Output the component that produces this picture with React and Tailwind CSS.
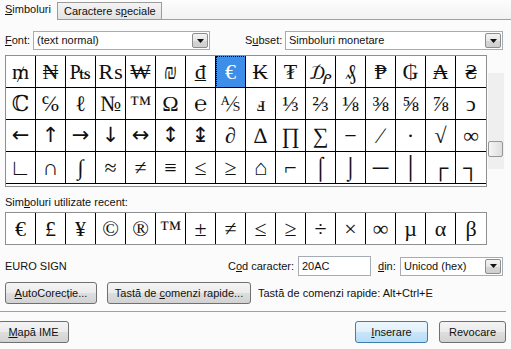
import React from "react";

const ROWS = [
  ["₥", "₦", "₧", "₨", "₩", "₪", "₫", "€", "₭", "₮", "₯", "₰", "₱", "₲", "₳", "₴"],
  ["ℂ", "℅", "ℓ", "№", "™", "Ω", "℮", "⅍", "ⅎ", "⅓", "⅔", "⅛", "⅜", "⅝", "⅞", "ↄ"],
  ["←", "↑", "→", "↓", "↔", "↕", "↨", "∂", "∆", "∏", "∑", "−", "∕", "∙", "√", "∞"],
  ["∟", "∩", "∫", "≈", "≠", "≡", "≤", "≥", "⌂", "⌐", "⌠", "⌡", "─", "│", "┌", "┐"],
];

const ARROWS = new Set(["←", "↑", "→", "↓", "↔", "↕", "↨"]);

const RECENT = ["€", "£", "¥", "©", "®", "™", "±", "≠", "≤", "≥", "÷", "×", "∞", "µ", "α", "β"];

function Arrow() {
  return (
    <svg width="7" height="4" viewBox="0 0 7 4">
      <path d="M0 0 H7 L3.5 4 Z" fill="#111" />
    </svg>
  );
}

function Combo({ width, text }) {
  return (
    <div
      className={`${width} h-[19px] border border-[#a5acb5] bg-white flex items-center pl-[3px] pr-[1px]`}
    >
      <span className="flex-1 truncate">{text}</span>
      <div className="w-[16px] h-[15px] border border-[#8d8d8d] rounded-[2px] bg-[linear-gradient(to_bottom,#f3f3f3_0%,#e6e6e6_50%,#d6d6d6_51%,#cfcfcf_100%)] flex items-center justify-center">
        <Arrow />
      </div>
    </div>
  );
}

function Button({ width, children, primary }) {
  return (
    <div
      className={`${width} h-[22px] rounded-[3px] border flex items-center justify-center ${
        primary
          ? "border-[#3c7fb1] bg-[linear-gradient(to_bottom,#edf7fd_0%,#def0fb_50%,#c9e6f9_51%,#b8dcf6_100%)]"
          : "border-[#707070] bg-[linear-gradient(to_bottom,#f4f4f4_0%,#ebebeb_50%,#dedede_51%,#d2d2d2_100%)]"
      }`}
    >
      {children}
    </div>
  );
}

export default function App() {
  return (
    <div className="w-[511px] h-[349px] overflow-hidden bg-[#fbfbfb] text-[11px] leading-[13px] text-[#111] font-['Liberation_Sans',sans-serif]">
      {/* Tabs */}
      <div className="h-[20px] flex bg-[linear-gradient(to_bottom,#fdfdfd,#f1f1f1)]">
        <div className="w-[57px] h-[20px] bg-[#fbfbfb] flex items-center pl-[5px] pb-[1px]">
          <span>
            <u>S</u>imboluri
          </span>
        </div>
        <div className="w-[105px] h-[18px] mt-[2px] border border-[#9b9b9b] bg-[linear-gradient(to_bottom,#f4f4f4,#e3e3e3)] flex items-center pl-[6px]">
          <span>
            Caractere s<u>p</u>eciale
          </span>
        </div>
        <div className="flex-1 border-b border-[#a0a0a0]" />
      </div>

      <div className="px-[5px]">
        {/* Font / Subset row */}
        <div className="mt-[11px] h-[19px] flex items-center">
          <span className="w-[28px]">
            <u>F</u>ont:
          </span>
          <Combo width="w-[177px]" text="(text normal)" />
          <span className="ml-[35px] w-[40px]">
            S<u>u</u>bset:
          </span>
          <Combo width="w-[218px]" text="Simboluri monetare" />
        </div>

        {/* Symbol grid + scrollbar */}
        <div className="mt-[5px] flex">
          <div className="w-[482px] border border-[#8e8f8f] pb-[2px] bg-white">
            {ROWS.map((row, ri) => (
              <div key={ri} className="flex">
                {row.map((ch, ci) => {
                  const sel = ri === 0 && ci === 7;
                  const arrow = ARROWS.has(ch);
                  return (
                    <div
                      key={ci}
                      className={`w-[30px] h-[32px] border-b border-black flex items-center justify-center leading-none ${
                        arrow
                          ? "font-['DejaVu_Sans',sans-serif] text-[21px]"
                          : "font-['Liberation_Serif','DejaVu_Serif',serif] text-[22px]"
                      } ${ci < 15 ? "border-r" : ""} ${
                        sel
                          ? "bg-[#3d8ee8] text-white outline-1 outline-dotted outline-black -outline-offset-1"
                          : ""
                      }`}
                    >
                      {ch}
                    </div>
                  );
                })}
              </div>
            ))}
          </div>
          <div className="ml-[1px] mt-[18px] w-[16px] h-[96px] bg-[#efefef] flex flex-col">
            <div className="h-[68px]" />
            <div className="h-[16px] w-[15px] border border-[#979797] rounded-[2px] bg-[linear-gradient(to_right,#f5f5f5,#dedede)]" />
          </div>
        </div>

        {/* Recent label */}
        <div className="mt-[9px]">
          Sim<u>b</u>oluri utilizate recent:
        </div>

        {/* Recent row */}
        <div className="mt-[3px] w-[482px] h-[33px] border border-[#8e8f8f] bg-white flex">
          {RECENT.map((ch, i) => (
            <div
              key={i}
              className={`w-[30px] h-[31px] border-black flex items-center justify-center font-['Liberation_Serif','DejaVu_Serif',serif] text-[22px] leading-none ${
                i < 15 ? "border-r" : ""
              }`}
            >
              {ch}
            </div>
          ))}
        </div>

        {/* Code row */}
        <div className="mt-[11px] h-[20px] flex items-center">
          <span className="w-[223px]">EURO SIGN</span>
          <span className="w-[70px]">
            C<u>o</u>d caracter:
          </span>
          <div className="w-[73px] h-[20px] border border-[#a5acb5] bg-white flex items-center pl-[3px]">
            20AC
          </div>
          <span className="ml-[7px] w-[22px]">
            <u>d</u>in:
          </span>
          <Combo width="w-[103px]" text="Unicod (hex)" />
        </div>

        {/* Buttons row */}
        <div className="mt-[6px] h-[22px] flex items-center">
          <Button width="w-[92px]">
            <span>
              <u>A</u>utoCorecție...
            </span>
          </Button>
          <div className="ml-[10px]">
            <Button width="w-[144px]">
              <span>
                Tastă de <u>c</u>omenzi rapide...
              </span>
            </Button>
          </div>
          <span className="ml-[7px]">Tastă de comenzi rapide: Alt+Ctrl+E</span>
        </div>
      </div>

      {/* Separator */}
      <div className="mt-[7px] w-[506px] h-px bg-[#a0a0a0]" />

      {/* Bottom buttons */}
      <div className="mt-[9px] h-[22px] flex">
        <div className="-ml-[2px]">
          <Button width="w-[71px]">
            <span>
              <u>M</u>apă IME
            </span>
          </Button>
        </div>
        <div className="flex-1" />
        <Button width="w-[73px]" primary>
          <span>
            <u>I</u>nserare
          </span>
        </Button>
        <div className="ml-[11px] mr-[5px]">
          <Button width="w-[67px]">
            <span>Revocare</span>
          </Button>
        </div>
      </div>
    </div>
  );
}
